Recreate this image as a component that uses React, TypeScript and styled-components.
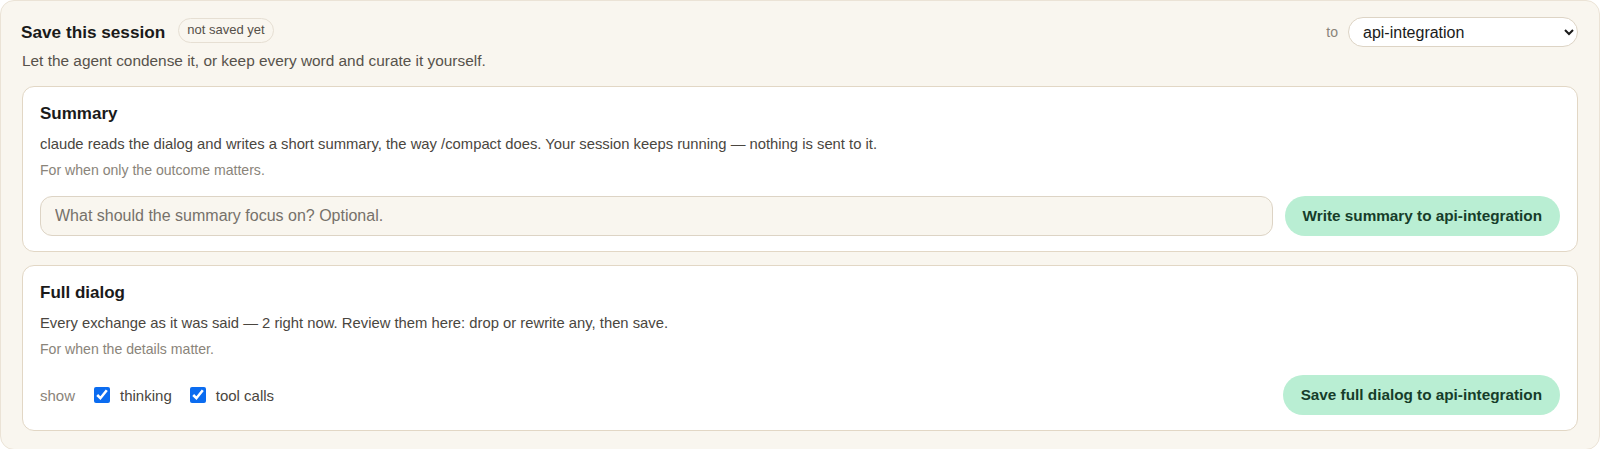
import React from "react";
import styled, { createGlobalStyle } from "styled-components";

const Global = createGlobalStyle`
  html, body { margin: 0; padding: 0; background: #ffffff; }
  body { font-family: "Liberation Sans", Arial, sans-serif; color: #1f1f1f; }
  * { box-sizing: border-box; }
`;

const Panel = styled.section`
  width: 1600px;
  background: #f9f6ef;
  border: 1px solid #ebe3d6;
  border-radius: 14px;
  padding: 16px 21px 18px 20px;
  display: flex;
  flex-direction: column;
`;

const HeaderRow = styled.div`
  display: flex;
  align-items: center;
  justify-content: space-between;
`;

const TitleGroup = styled.div`
  display: flex;
  align-items: center;
  gap: 13px;
`;

const Title = styled.h2`
  margin: 0;
  font-size: 17.2px;
  font-weight: 700;
  color: #1a1a1a;
  line-height: 30px;
`;

const Badge = styled.span`
  font-size: 13px;
  color: #555049;
  border: 1px solid #e6dfd3;
  border-radius: 999px;
  padding: 3px 8px 5px;
  line-height: 15px;
  margin-top: -4px;
`;

const TargetGroup = styled.label`
  display: flex;
  align-items: center;
  gap: 10px;
  font-size: 14px;
  color: #8a847a;
`;

const Select = styled.select`
  width: 230px;
  height: 30px;
  border: 1px solid #ddd4c5;
  border-radius: 999px;
  background: #ffffff;
  font-family: "Liberation Sans", Arial, sans-serif;
  font-size: 16px;
  color: #1a1a1a;
  padding: 0 10px 0 10px;
`;

const Subtitle = styled.p`
  margin: 4px 0 15px 1px;
  font-size: 15.4px;
  color: #57524b;
  line-height: 20px;
`;

const Cards = styled.div`
  display: flex;
  flex-direction: column;
  gap: 13px;
  padding-left: 1px;
`;

const Card = styled.div`
  background: #ffffff;
  border: 1px solid #e2d7c5;
  border-radius: 12px;
  padding: 16px 17px 15px;
  display: flex;
  flex-direction: column;
`;

const CardTitle = styled.h3`
  margin: 0;
  font-size: 17px;
  font-weight: 700;
  color: #1a1a1a;
  line-height: 22px;
`;

const CardText = styled.p`
  margin: 8px 0 0;
  font-size: 14.8px;
  color: #4a4640;
  line-height: 22px;
`;

const CardHint = styled.p`
  margin: 5px 0 0;
  font-size: 14.1px;
  color: #8a847a;
  line-height: 20px;
`;

const ActionRow = styled.div`
  display: flex;
  align-items: center;
  gap: 12px;
  margin-top: 16px;
`;

const Input = styled.input`
  flex: 1;
  height: 40px;
  border: 1px solid #ddd4c5;
  border-radius: 12px;
  background: #f9f6ef;
  font-family: "Liberation Sans", Arial, sans-serif;
  font-size: 16px;
  padding: 0 14px;
  color: #1a1a1a;
  &::placeholder { color: #76716a; }
`;

const PrimaryButton = styled.button`
  height: 40px;
  border: none;
  border-radius: 999px;
  background: #b9eed3;
  color: #163d2a;
  font-family: "Liberation Sans", Arial, sans-serif;
  font-size: 15.3px;
  font-weight: 700;
  padding: 0 18px;
  white-space: nowrap;
`;

const Toggles = styled.div`
  flex: 1;
  display: flex;
  align-items: center;
  font-size: 15px;
  color: #4a4640;
`;

const ShowLabel = styled.span`
  color: #8a847a;
  margin-right: 19px;
`;

const Toggle = styled.label`
  display: flex;
  align-items: center;
  gap: 10px;
  margin-right: 18px;
`;

const Check = styled.input`
  width: 16px;
  height: 16px;
  margin: 0;
  accent-color: #0b6cf0;
`;

export default function App() {
  return (
    <>
      <Global />
      <Panel>
        <HeaderRow>
          <TitleGroup>
            <Title>Save this session</Title>
            <Badge>not saved yet</Badge>
          </TitleGroup>
          <TargetGroup>
            to
            <Select defaultValue="api-integration">
              <option value="api-integration">api-integration</option>
            </Select>
          </TargetGroup>
        </HeaderRow>
        <Subtitle>Let the agent condense it, or keep every word and curate it yourself.</Subtitle>
        <Cards>
          <Card>
            <CardTitle>Summary</CardTitle>
            <CardText>
              claude reads the dialog and writes a short summary, the way /compact does. Your session keeps running — nothing is sent to it.
            </CardText>
            <CardHint>For when only the outcome matters.</CardHint>
            <ActionRow>
              <Input placeholder="What should the summary focus on? Optional." />
              <PrimaryButton>Write summary to api-integration</PrimaryButton>
            </ActionRow>
          </Card>
          <Card>
            <CardTitle>Full dialog</CardTitle>
            <CardText>Every exchange as it was said — 2 right now. Review them here: drop or rewrite any, then save.</CardText>
            <CardHint>For when the details matter.</CardHint>
            <ActionRow>
              <Toggles>
                <ShowLabel>show</ShowLabel>
                <Toggle>
                  <Check type="checkbox" defaultChecked />
                  thinking
                </Toggle>
                <Toggle>
                  <Check type="checkbox" defaultChecked />
                  tool calls
                </Toggle>
              </Toggles>
              <PrimaryButton>Save full dialog to api-integration</PrimaryButton>
            </ActionRow>
          </Card>
        </Cards>
      </Panel>
    </>
  );
}
